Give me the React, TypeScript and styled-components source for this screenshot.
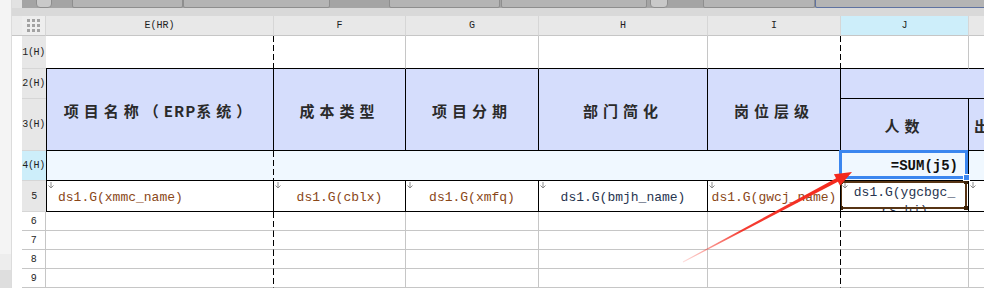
import styled, { createGlobalStyle, css } from "styled-components";

const GlobalStyle = createGlobalStyle`
  html, body { margin: 0; padding: 0; background: #fff; }
  body { width: 984px; height: 288px; overflow: hidden; font-family: "Liberation Mono", monospace; }
  #root { height: 288px; }
`;

type Line = "none" | "grid" | "soft" | "black" | "dash";

const lineValue = (kind?: Line) => {
  if (kind === "grid") return "1px solid #c6c6c6";
  if (kind === "soft") return "1px solid #d6d6d6";
  if (kind === "black") return "1px solid #000";
  if (kind === "dash") return "1px solid transparent";
  return "0";
};

const Page = styled.div`
  position: relative;
  display: flex;
  width: 984px;
  height: 288px;
  overflow: hidden;
`;

const LeftRail = styled.div`
  width: 12px;
  display: flex;
  flex-direction: column;
  background: #f4f4f4;
  border-right: 1px solid #dcdcdc;
  box-sizing: border-box;
`;

const RailBlock = styled.div<{ $h: number; $bg: string }>`
  height: ${p => p.$h}px;
  background: ${p => p.$bg};
`;

const Spacer = styled.div`
  flex: 1;
`;

const Main = styled.div`
  flex: 1;
  display: flex;
  flex-direction: column;
  min-width: 0;
`;

const Toolbar = styled.div`
  height: 9px;
  display: flex;
  align-items: flex-end;
  overflow: hidden;
  background: #a4a4a4;
  border-left: 10px solid #e2e2e2;
`;

const ToolBox = styled.div<{ $w: number; $gap: number; $kind?: "btn" | "blue" }>`
  flex: none;
  width: ${p => p.$w}px;
  margin-left: ${p => p.$gap}px;
  height: 30px;
  box-sizing: border-box;
  background: #b4b4b4;
  border: 1px solid #8e8e8e;
  border-radius: 2px;
  ${p =>
    p.$kind === "btn" &&
    css`
      background: #c9c9c9;
      border-radius: 4px;
    `}
  ${p =>
    p.$kind === "blue" &&
    css`
      border-color: #5f72a0;
    `}
`;

const Strip = styled.div`
  height: 9px;
  background: #d9d9d9;
`;

const Sheet = styled.div`
  display: grid;
  grid-template-columns: 10px 24px 228px 132px 133px 169px 133px 128px 1fr;
  grid-template-rows: 20px 33px 30px 52px 30px 31px 19px 19px 19px 19px;
`;

const Cell = styled.div<{
  $bg?: string;
  $r?: Line;
  $b?: Line;
  $l?: Line;
  $span?: number;
  $rows?: number;
  $align?: "left" | "center" | "right";
  $pad?: number;
  $clip?: boolean;
}>`
  position: relative;
  box-sizing: border-box;
  min-width: 0;
  display: flex;
  align-items: center;
  justify-content: ${p => (p.$align === "left" ? "flex-start" : p.$align === "right" ? "flex-end" : "center")};
  padding: 0 ${p => p.$pad ?? 0}px;
  grid-column: span ${p => p.$span ?? 1};
  grid-row: span ${p => p.$rows ?? 1};
  background-color: ${p => p.$bg ?? "#fff"};
  border-right: ${p => lineValue(p.$r)};
  border-bottom: ${p => lineValue(p.$b)};
  border-left: ${p => lineValue(p.$l)};
  overflow: ${p => (p.$clip ? "hidden" : "visible")};
  ${p =>
    p.$r === "dash" &&
    css`
      background-image: repeating-linear-gradient(to bottom, #000 0 6px, transparent 6px 9px);
      background-size: 1px 100%;
      background-position: right top;
      background-repeat: no-repeat;
      background-origin: border-box;
    `}
`;

const ColLetter = styled.span`
  font-family: "Liberation Mono", monospace;
  font-size: 10px;
  color: #1e1e1e;
`;

const RowLabel = styled.span`
  font-family: "Liberation Mono", monospace;
  font-size: 10px;
  letter-spacing: -0.3px;
  color: #1e1e1e;
`;

const Dots = styled.div`
  display: grid;
  grid-template-columns: repeat(3, 3px);
  gap: 2px;
  span {
    width: 3px;
    height: 3px;
    background: #a2a2a2;
  }
`;

const HeadText = styled.span`
  font-family: "Noto Sans CJK SC", sans-serif;
  font-weight: 700;
  font-size: 15px;
  letter-spacing: 5px;
  color: #2a2a2a;
  white-space: nowrap;
  margin-top: 2px;
  b {
    font-weight: 700;
    letter-spacing: 1px;
  }
`;

const DataText = styled.span<{ $tone?: "brown" | "navy" }>`
  font-family: "Liberation Mono", monospace;
  font-size: 13px;
  color: ${p => (p.$tone === "navy" ? "#27344f" : "#8a4718")};
  white-space: nowrap;
  margin-top: 3px;
`;

const WrapText = styled(DataText)`
  white-space: normal;
  word-break: break-all;
  text-align: center;
  align-self: flex-start;
  margin-top: 0;
  padding: 3px 9px 0;
  line-height: 18px;
`;

const Formula = styled.span`
  font-family: "Liberation Mono", monospace;
  font-weight: 700;
  font-size: 14px;
  color: #111;
  padding-right: 10px;
`;

const Selection = styled.div`
  position: absolute;
  top: -1px;
  left: -2px;
  right: 0;
  bottom: 1px;
  border: 3px solid #3b86ef;
  z-index: 3;
  &::after {
    content: "";
    position: absolute;
    right: -5px;
    bottom: -5px;
    width: 5px;
    height: 5px;
    background: #3b86ef;
    border: 1px solid #fff;
  }
`;

const ExpandBox = styled.div`
  position: absolute;
  top: 0;
  left: -1px;
  right: 1px;
  bottom: 2px;
  border: 2px solid #573414;
  z-index: 2;
`;

const Corner = styled.i<{ $v: "top" | "bottom"; $h: "left" | "right" }>`
  position: absolute;
  ${p => p.$v}: -3px;
  ${p => p.$h}: -3px;
  width: 4px;
  height: 4px;
  background: #3d230a;
`;

const MarkerSvg = styled.svg`
  position: absolute;
  top: 1px;
  left: 1px;
  z-index: 1;
`;

const Overlay = styled.svg`
  position: absolute;
  left: 0;
  top: 0;
  pointer-events: none;
  z-index: 5;
`;

const tools = [
  { gap: 14, w: 16, kind: "btn" as const },
  { gap: 20, w: 111 },
  { gap: 0, w: 147 },
  { gap: 59, w: 111 },
  { gap: 1, w: 146 },
  { gap: 3, w: 18, kind: "btn" as const },
  { gap: 35, w: 112 },
  { gap: 0, w: 175, kind: "blue" as const },
];

function Marker() {
  return (
    <MarkerSvg width="6" height="7" viewBox="0 0 6 7">
      <path d="M3 0 V6 M0.5 3.5 L3 6 L5.5 3.5" stroke="#8c8c8c" strokeWidth="1" fill="none" />
    </MarkerSvg>
  );
}

function RowHead({ label, bg = "#e7e7e7", center }: { label: string; bg?: string; center?: boolean }) {
  return (
    <Cell $bg={bg} $b="soft" $align={center ? "center" : "right"} $pad={1}>
      <RowLabel>{label}</RowLabel>
    </Cell>
  );
}

const lavender = "#d5ddfc";
const paleBlue = "#f0f8ff";
const cyan = "#cdeefa";

function App() {
  return (
    <Page>
      <GlobalStyle />
      <LeftRail>
        <Spacer />
        <RailBlock $h={16} $bg="#ededed" />
        <RailBlock $h={18} $bg="#dedede" />
      </LeftRail>
      <Main>
        <Toolbar>
          {tools.map((t, i) => (
            <ToolBox key={i} $w={t.w} $gap={t.gap} $kind={t.kind} />
          ))}
        </Toolbar>
        <Strip />
        <Sheet>
          {/* column header */}
          <Cell $bg="#ebebeb" $b="grid" />
          <Cell $bg="#eeeeee" $b="grid" $r="soft">
            <Dots>
              {Array.from({ length: 9 }).map((_, i) => (
                <span key={i} />
              ))}
            </Dots>
          </Cell>
          {["E(HR)", "F", "G", "H", "I"].map(c => (
            <Cell key={c} $bg="#e8e8e8" $b="grid" $r="soft">
              <ColLetter>{c}</ColLetter>
            </Cell>
          ))}
          <Cell $bg={cyan} $b="grid" $r="soft">
            <ColLetter>J</ColLetter>
          </Cell>
          <Cell $bg="#e8e8e8" $b="grid" />

          {/* row 1 */}
          <Cell />
          <RowHead label="1(H)" />
          <Cell $r="dash" $b="black" />
          <Cell $r="grid" $b="black" />
          <Cell $r="grid" $b="black" />
          <Cell $r="grid" $b="black" />
          <Cell $r="dash" $b="black" />
          <Cell $r="grid" $b="black" />
          <Cell $b="black" />

          {/* rows 2-3 header */}
          <Cell />
          <RowHead label="2(H)" />
          <Cell $rows={2} $bg={lavender} $l="black" $r="black" $b="black">
            <HeadText>
              项目名称（<b>ERP</b>系统）
            </HeadText>
          </Cell>
          <Cell $rows={2} $bg={lavender} $r="black" $b="black">
            <HeadText>成本类型</HeadText>
          </Cell>
          <Cell $rows={2} $bg={lavender} $r="black" $b="black">
            <HeadText>项目分期</HeadText>
          </Cell>
          <Cell $rows={2} $bg={lavender} $r="black" $b="black">
            <HeadText>部门简化</HeadText>
          </Cell>
          <Cell $rows={2} $bg={lavender} $r="black" $b="black">
            <HeadText>岗位层级</HeadText>
          </Cell>
          <Cell $span={2} $bg={lavender} $b="black" />
          <Cell />
          <RowHead label="3(H)" />
          <Cell $bg={lavender} $r="black" $b="black">
            <HeadText>人数</HeadText>
          </Cell>
          <Cell $bg={lavender} $b="black" $align="left" $pad={5} $clip>
            <HeadText>出勤</HeadText>
          </Cell>

          {/* row 4 */}
          <Cell />
          <RowHead label="4(H)" bg={cyan} />
          <Cell $bg={paleBlue} $l="black" $r="dash" $b="black" />
          <Cell $span={4} $bg={paleBlue} $r="black" $b="black" />
          <Cell $bg={paleBlue} $r="black" $b="black" $align="right">
            <Formula>=SUM(j5)</Formula>
            <Selection />
          </Cell>
          <Cell $bg={paleBlue} $b="black" />

          {/* row 5 */}
          <Cell />
          <RowHead label="5" center />
          <Cell $l="black" $r="black" $b="black" $align="left" $pad={11}>
            <Marker />
            <DataText>ds1.G(xmmc_name)</DataText>
          </Cell>
          <Cell $r="black" $b="black">
            <Marker />
            <DataText>ds1.G(cblx)</DataText>
          </Cell>
          <Cell $r="black" $b="black">
            <Marker />
            <DataText>ds1.G(xmfq)</DataText>
          </Cell>
          <Cell $r="black" $b="black">
            <Marker />
            <DataText $tone="navy">ds1.G(bmjh_name)</DataText>
          </Cell>
          <Cell $r="black" $b="black">
            <Marker />
            <DataText>ds1.G(gwcj_name)</DataText>
          </Cell>
          <Cell $r="black" $b="black" $clip>
            <Marker />
            <WrapText $tone="navy">ds1.G(ygcbgc_rs_hj)</WrapText>
            <ExpandBox>
              <Corner $v="top" $h="left" />
              <Corner $v="top" $h="right" />
              <Corner $v="bottom" $h="left" />
              <Corner $v="bottom" $h="right" />
            </ExpandBox>
          </Cell>
          <Cell $b="black">
            <Marker />
          </Cell>

          {/* rows 6-9 */}
          {["6", "7", "8", "9"].map(r => [
            <Cell key={r + "g"} />,
            <Cell key={r + "h"} $b="grid" $r="grid">
              <RowLabel>{r}</RowLabel>
            </Cell>,
            <Cell key={r + "e"} $r="dash" $b="grid" />,
            <Cell key={r + "f"} $r="grid" $b="grid" />,
            <Cell key={r + "gg"} $r="grid" $b="grid" />,
            <Cell key={r + "hh"} $r="grid" $b="grid" />,
            <Cell key={r + "i"} $r="dash" $b="grid" />,
            <Cell key={r + "j"} $r="grid" $b="grid" />,
            <Cell key={r + "k"} $b="grid" />,
          ])}
        </Sheet>
      </Main>

      {/* annotation arrow */}
      <Overlay width="984" height="288" viewBox="0 0 984 288">
        <defs>
          <linearGradient id="arrowFade" x1="683" y1="262" x2="852" y2="172" gradientUnits="userSpaceOnUse">
            <stop offset="0" stopColor="#f4271b" stopOpacity="0.15" />
            <stop offset="0.35" stopColor="#f4271b" stopOpacity="0.9" />
            <stop offset="1" stopColor="#f4271b" stopOpacity="1" />
          </linearGradient>
        </defs>
        <polygon
          points="682.8,261.6 836.1,178.2 833.9,174.3 852,172 840.1,185.7 837.9,181.8 683.2,262.4"
          fill="url(#arrowFade)"
        />
      </Overlay>
    </Page>
  );
}

export default App;
